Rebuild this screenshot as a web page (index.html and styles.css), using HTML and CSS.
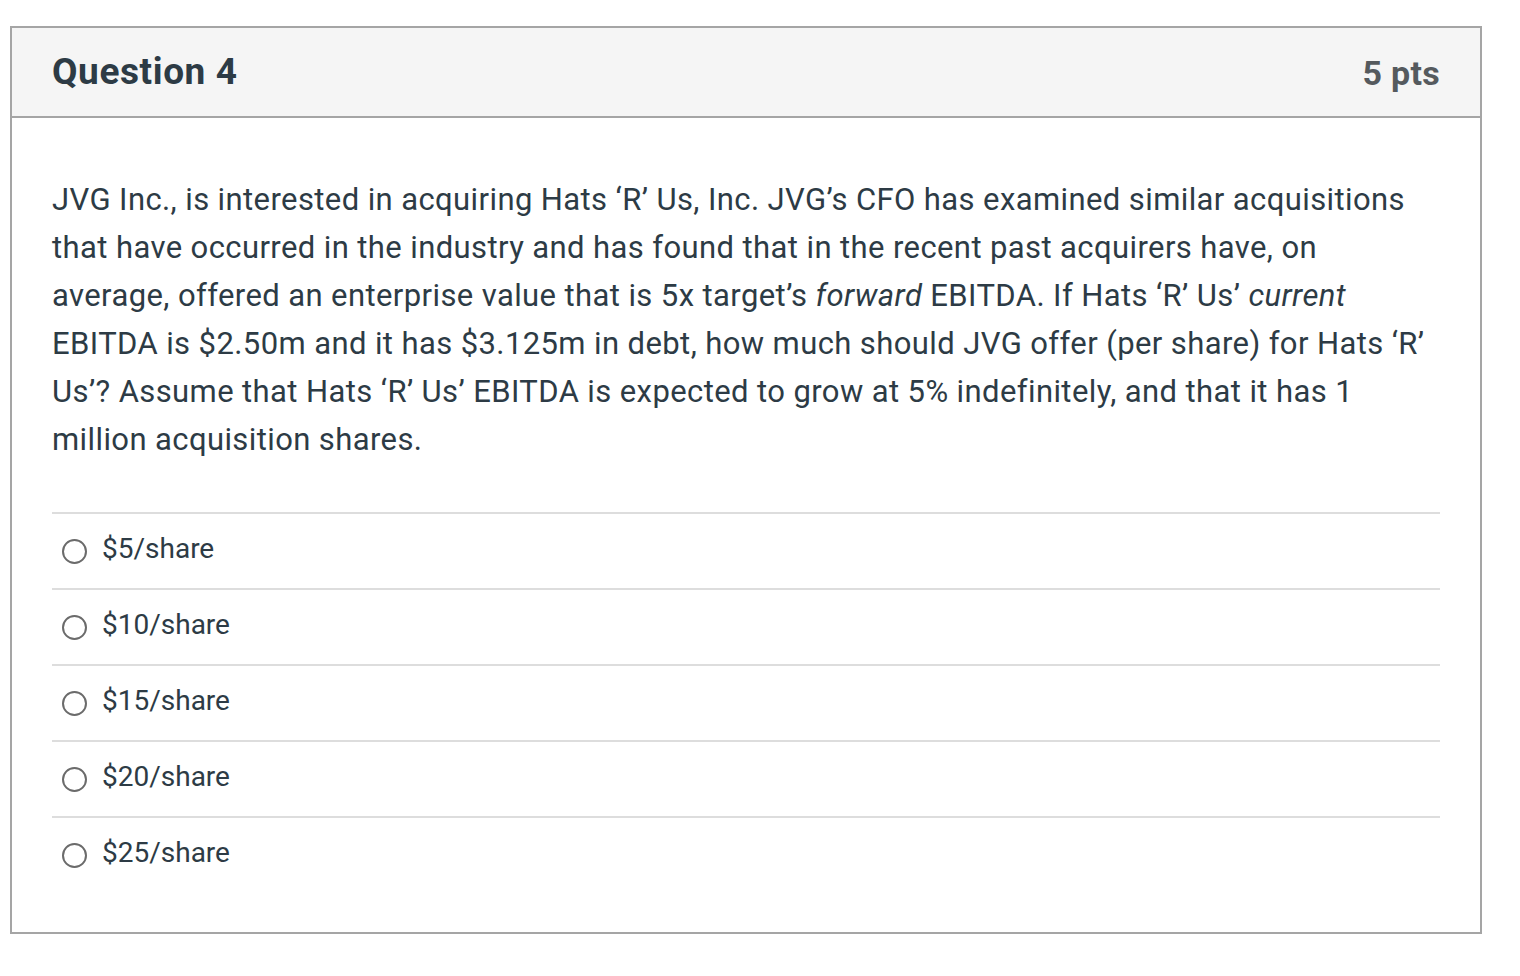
FILE: index.html
```html
<!DOCTYPE html>
<html>
<head>
<meta charset="utf-8">
<link rel="stylesheet" href="styles.css">
</head>
<body>
<div class="question">
  <div class="q-header">
    <h2 class="q-title">Question 4</h2>
    <span class="q-points">5 pts</span>
  </div>
  <div class="q-body">
    <p class="q-text">JVG Inc., is interested in acquiring Hats ‘R’ Us, Inc. JVG’s CFO has examined similar acquisitions that have occurred in the industry and has found that in the recent past acquirers have, on average, offered an enterprise value that is 5x target’s <em>forward</em> EBITDA. If Hats ‘R’ Us’ <em>current</em> EBITDA is $2.50m and it has $3.125m in debt, how much should JVG offer (per share) for Hats ‘R’ Us’? Assume that Hats ‘R’ Us’ EBITDA is expected to grow at 5% indefinitely, and that it has 1 million acquisition shares.</p>
    <div class="answers">
      <label class="answer"><span class="radio"></span><span class="a-text">$5/share</span></label>
      <label class="answer"><span class="radio"></span><span class="a-text">$10/share</span></label>
      <label class="answer"><span class="radio"></span><span class="a-text">$15/share</span></label>
      <label class="answer"><span class="radio"></span><span class="a-text">$20/share</span></label>
      <label class="answer"><span class="radio"></span><span class="a-text">$25/share</span></label>
    </div>
  </div>
</div>
</body>
</html>
```
FILE: styles.css
```css
html, body {
  margin: 0;
  padding: 0;
  background: #ffffff;
}
body {
  padding: 26px 0 0 10px;
  font-family: Roboto, "Liberation Sans", sans-serif;
  color: #2d3b45;
}
.question {
  width: 1468px;
  border: 2px solid #a5a5a5;
}
.q-header {
  height: 88px;
  background: #f5f5f5;
  border-bottom: 2px solid #a5a5a5;
  display: flex;
  align-items: center;
  justify-content: space-between;
  padding: 0 40px 0 40px;
}
.q-title {
  margin: 0;
  font-size: 37px;
  font-weight: 700;
  letter-spacing: 0.6px;
  color: #2d3b45;
  position: relative;
  top: -1px;
}
.q-points {
  font-size: 34px;
  font-weight: 700;
  letter-spacing: 0.3px;
  color: #555a5e;
  position: relative;
  top: 1px;
}
.q-body {
  padding: 58px 40px 40px 40px;
}
.q-text {
  margin: 0 0 48px 0;
  font-size: 31px;
  letter-spacing: 0.4px;
  line-height: 48px;
}
.answers {
  display: flex;
  flex-direction: column;
}
.answer {
  height: 74px;
  border-top: 2px solid #dddddd;
  display: flex;
  align-items: center;
  padding-left: 10px;
}
.radio {
  width: 21px;
  height: 21px;
  border: 2px solid #6b6b6b;
  border-radius: 50%;
  margin-right: 15px;
  flex: none;
}
.a-text {
  font-size: 28px;
  position: relative;
  top: -3px;
}
```
